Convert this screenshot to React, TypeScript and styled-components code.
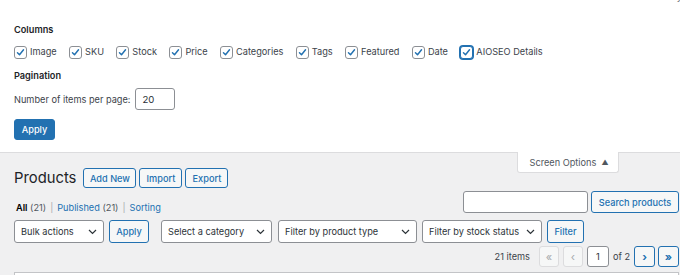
import React from "react";
import styled, { createGlobalStyle } from "styled-components";

const Global = createGlobalStyle`
  html, body { margin: 0; padding: 0; overflow: hidden; }
  body {
    width: 680px;
    height: 275px;
    background: #f0f0f1;
    font-family: Inter, "Liberation Sans", Arial, sans-serif;
    font-size: 9.2px;
    color: #3c434a;
  }
  * { box-sizing: border-box; }
`;

const TopPanel = styled.div`
  position: relative;
  background: #fff;
  border-bottom: 1px solid #dcdcde;
  height: 153px;
  padding: 23px 14px 0 14px;
  display: flex;
  flex-direction: column;
  align-items: flex-start;
`;

const Clipped = styled.div`
  position: absolute;
  top: -9px;
  right: -2px;
  color: #646970;
  font-size: 9.5px;
  line-height: 12px;
`;

const Legend = styled.div<{ mt?: number }>`
  font-weight: 600;
  color: #1d2327;
  line-height: 14px;
  margin-top: ${(p) => p.mt ?? 0}px;
`;

const CheckRow = styled.div`
  display: flex;
  align-items: center;
  height: 14px;
  margin-top: 8px;
`;

const CheckLabel = styled.label`
  display: flex;
  align-items: center;
  gap: 3px;
  margin-right: 12.4px;
  line-height: 14px;
  white-space: nowrap;
`;

const Box = styled.span<{ focused?: boolean }>`
  width: 13px;
  height: 13px;
  border-radius: 3px;
  border: 1px solid ${(p) => (p.focused ? "#2271b1" : "#8c8f94")};
  box-shadow: ${(p) => (p.focused ? "0 0 0 1px #2271b1" : "none")};
  background: #fff;
  display: inline-flex;
  align-items: center;
  justify-content: center;
  flex: none;
`;

const PerPageRow = styled.div`
  display: flex;
  align-items: center;
  gap: 5px;
  margin-top: 5px;
`;

const NumberInput = styled.div`
  width: 40px;
  height: 22px;
  border: 1px solid #8c8f94;
  border-radius: 3px;
  background: #fff;
  padding-left: 6px;
  display: flex;
  align-items: center;
  color: #2c3338;
  font-size: 9.6px;
`;

const PrimaryButton = styled.div`
  margin-top: 9px;
  width: 41px;
  height: 21px;
  border-radius: 3px;
  background: #2271b1;
  border: 1px solid #2271b1;
  color: #fff;
  font-weight: 500;
  display: flex;
  align-items: center;
  justify-content: center;
`;

const Main = styled.div`
  position: relative;
  padding: 15px 1px 0 14px;
`;

const ScreenTab = styled.div`
  position: absolute;
  top: -1px;
  right: 61px;
  width: 102px;
  height: 21px;
  background: #fff;
  border: 1px solid #dcdcde;
  border-top: none;
  border-radius: 0 0 3px 3px;
  color: #50575e;
  display: flex;
  align-items: center;
  justify-content: center;
  gap: 5px;
  padding-left: 2px;
`;

const Arrow = styled.span`
  font-size: 7px;
  line-height: 7px;
`;

const HeaderRow = styled.div`
  display: flex;
  align-items: center;
  height: 20px;
`;

const Title = styled.h1`
  margin: 0 7px 0 0;
  font-size: 14.8px;
  font-weight: 400;
  color: #1d2327;
  line-height: 20px;
`;

const OutlineButton = styled.div<{ w?: number; h?: number; ml?: number; mr?: number }>`
  height: ${(p) => p.h ?? 20}px;
  ${(p) => (p.w ? `width: ${p.w}px;` : "")}
  padding: 0 6px;
  margin-left: ${(p) => p.ml ?? 0}px;
  margin-right: ${(p) => p.mr ?? 0}px;
  border: 1px solid #2271b1;
  border-radius: 3px;
  background: #f6f7f7;
  color: #2271b1;
  font-weight: 500;
  display: flex;
  align-items: center;
  justify-content: center;
  white-space: nowrap;
  flex: none;
`;

const SubRow = styled.div`
  display: flex;
  align-items: flex-end;
  justify-content: space-between;
  margin-top: 3px;
`;

const SubSub = styled.div`
  display: flex;
  align-items: center;
  padding-left: 2px;
  margin-bottom: -2px;
  line-height: 14px;
  white-space: pre;
  color: #50575e;
`;

const Current = styled.span`
  font-weight: 600;
  color: #000;
`;

const Link = styled.span`
  color: #2271b1;
`;

const Sep = styled.span`
  color: #a7aaad;
  margin: 0 4px;
`;

const SearchBox = styled.div`
  display: flex;
  gap: 3px;
`;

const TextField = styled.div`
  width: 125px;
  height: 22px;
  border: 1px solid #8c8f94;
  border-radius: 3px;
  background: #fff;
`;

const FilterRow = styled.div`
  display: flex;
  align-items: center;
  margin-top: 7px;
  height: 23px;
`;

const Select = styled.div<{ w: number; ml?: number }>`
  width: ${(p) => p.w}px;
  margin-left: ${(p) => p.ml ?? 0}px;
  height: 23px;
  border: 1px solid #8c8f94;
  border-radius: 3px;
  background: #fff;
  color: #2c3338;
  display: flex;
  align-items: center;
  justify-content: space-between;
  padding: 0 6px 0 6px;
  white-space: nowrap;
  flex: none;
`;

const PagRow = styled.div`
  display: flex;
  justify-content: flex-end;
  align-items: center;
  margin-top: 3px;
  height: 21px;
`;

const Count = styled.span`
  margin-right: 5px;
  color: #3c434a;
`;

const PageBtn = styled.div<{ disabled?: boolean }>`
  width: ${(p) => (p.disabled ? 20 : 21)}px;
  height: 21px;
  border-radius: 3px;
  border: 1px solid ${(p) => (p.disabled ? "#dcdcde" : "#2271b1")};
  background: #f6f7f7;
  color: ${(p) => (p.disabled ? "#a7aaad" : "#2271b1")};
  display: flex;
  align-items: center;
  justify-content: center;
  font-size: 11px;
  font-weight: ${(p) => (p.disabled ? 400 : 700)};
  margin-left: ${(p) => (p.disabled ? 4 : 3)}px;
  flex: none;
`;

const PageInput = styled.div`
  width: 22px;
  height: 21px;
  border: 1px solid #8c8f94;
  border-radius: 3px;
  background: #fff;
  display: flex;
  align-items: center;
  justify-content: center;
  margin-left: 4px;
  color: #2c3338;
`;

const OfText = styled.span`
  margin: 0 1px 0 4px;
`;

const Table = styled.div`
  margin-top: 5px;
  height: 20px;
  background: #fff;
  border: 1px solid #c3c4c7;
`;

const Check = () => (
  <svg width="11" height="11" viewBox="0 0 20 20">
    <path d="M4.5 10.5 L8.2 14.2 L15.5 5" fill="none" stroke="#2271b1" strokeWidth="2.6" strokeLinecap="round" strokeLinejoin="round" />
  </svg>
);

const Chevron = () => (
  <svg width="9" height="6" viewBox="0 0 9 6">
    <path d="M1 1 L4.5 4.5 L8 1" fill="none" stroke="#2c3338" strokeWidth="1.2" />
  </svg>
);

const columns = ["Image", "SKU", "Stock", "Price", "Categories", "Tags", "Featured", "Date", "AIOSEO Details"];

export default function App() {
  return (
    <>
      <Global />
      <TopPanel>
        <Clipped>Activity</Clipped>
        <Legend>Columns</Legend>
        <CheckRow>
          {columns.map((c, i) => (
            <CheckLabel key={c}>
              <Box focused={i === columns.length - 1}>
                <Check />
              </Box>
              {c}
            </CheckLabel>
          ))}
        </CheckRow>
        <Legend mt={10}>Pagination</Legend>
        <PerPageRow>
          <span>Number of items per page:</span>
          <NumberInput>20</NumberInput>
        </PerPageRow>
        <PrimaryButton>Apply</PrimaryButton>
      </TopPanel>
      <Main>
        <ScreenTab>
          <span>Screen Options</span>
          <Arrow>▲</Arrow>
        </ScreenTab>
        <HeaderRow>
          <Title>Products</Title>
          <OutlineButton w={53} mr={3}>Add New</OutlineButton>
          <OutlineButton w={43} mr={3}>Import</OutlineButton>
          <OutlineButton w={43}>Export</OutlineButton>
        </HeaderRow>
        <SubRow>
          <SubSub>
            <Current>All</Current> (21)<Sep>|</Sep>
            <Link>Published</Link> (21)<Sep>|</Sep>
            <Link>Sorting</Link>
          </SubSub>
          <SearchBox>
            <TextField />
            <OutlineButton h={22} w={88}>Search products</OutlineButton>
          </SearchBox>
        </SubRow>
        <FilterRow>
          <Select w={90}>Bulk actions<Chevron /></Select>
          <OutlineButton h={23} w={40} ml={5}>Apply</OutlineButton>
          <Select w={111} ml={12}>Select a category<Chevron /></Select>
          <Select w={139} ml={6}>Filter by product type<Chevron /></Select>
          <Select w={120} ml={5}>Filter by stock status<Chevron /></Select>
          <OutlineButton h={23} w={37} ml={5}>Filter</OutlineButton>
        </FilterRow>
        <PagRow>
          <Count>21 items</Count>
          <PageBtn disabled>«</PageBtn>
          <PageBtn disabled>‹</PageBtn>
          <PageInput>1</PageInput>
          <OfText>of 2</OfText>
          <PageBtn>›</PageBtn>
          <PageBtn>»</PageBtn>
        </PagRow>
        <Table />
      </Main>
    </>
  );
}
